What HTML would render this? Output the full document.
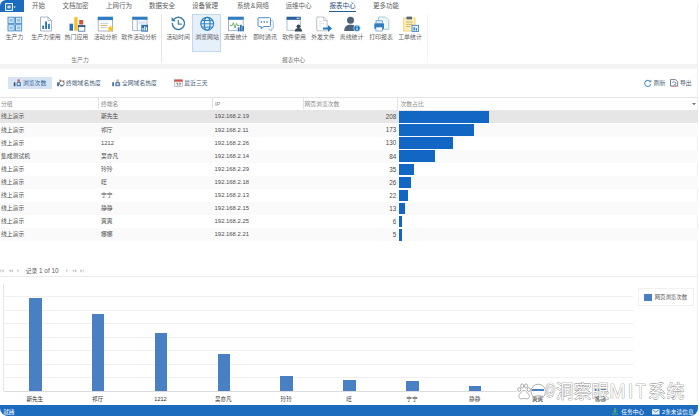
<!DOCTYPE html>
<html lang="zh-CN">
<head>
<meta charset="utf-8">
<title>报表中心 - 浏览网站</title>
<style>
html,body{margin:0;padding:0;background:#fff;}
body{width:700px;height:419px;overflow:hidden;position:relative;font-family:"Liberation Sans","Noto Sans CJK SC",sans-serif;font-size:6px;color:#444;-webkit-text-size-adjust:none;}
.a{position:absolute;white-space:nowrap;line-height:1;}
.tab{position:absolute;top:2.4px;font-size:6.5px;line-height:7px;color:#5e5e5e;white-space:nowrap;transform:translateX(-50%);}
.rb{position:absolute;top:34.3px;font-size:5.9px;line-height:7px;color:#5e5e5e;white-space:nowrap;transform:translateX(-50%);}
.ic{position:absolute;top:16px;width:16px;height:16px;}
.grp{position:absolute;top:56.7px;font-size:5.8px;line-height:7px;color:#777;white-space:nowrap;transform:translateX(-50%);}
.tb{position:absolute;top:79.5px;font-size:5.8px;line-height:7px;color:#4a5f78;white-space:nowrap;}
.th{position:absolute;top:100.5px;font-size:5.8px;line-height:7px;color:#8a8a8a;white-space:nowrap;}
.vs{position:absolute;top:98px;height:11px;width:1px;background:#e2e2e2;}
.row{position:absolute;left:0;width:698px;height:13.1px;}
.row span{position:absolute;top:3.1px;font-size:5.8px;line-height:7px;white-space:nowrap;color:#4c4c4c;}
.row i{position:absolute;left:399.100px;top:0.800px;height:11.500px;background:#1266c4;display:block;}
.c1{left:1px}.c2{left:101px}.c3{left:214.600px;font-size:5.900px !important;}.c4{right:301.800px;font-size:6.300px !important;top:2.900px !important;}
.g{position:absolute;left:3.5px;width:629px;height:1px;background:#f0f0f0;}
.bar{position:absolute;width:12.700px;background:#4880c3;}
.xl{position:absolute;top:396px;font-size:5.6px;line-height:7px;color:#333;white-space:nowrap;transform:translateX(-50%);}
</style>
</head>
<body>

<!-- window frame -->
<div class="a" style="left:697.300px;top:4px;width:1px;height:402px;background:#f0f0f0"></div>

<!-- app button -->
<div class="a" style="left:0;top:0;width:23.900px;height:12.200px;background:#1b6cbf;border-top-left-radius:6px;"></div>
<svg class="a" style="left:5px;top:2.5px" width="14" height="8" viewBox="0 0 14 8"><rect x="0.6" y="0.6" width="6.8" height="6.8" fill="none" stroke="#fff" stroke-width="1"/><rect x="2.4" y="2.6" width="3.2" height="2.8" fill="#cfe2f5"/><path d="M8.300 3.400h2.600l-1.300 1.500z" fill="#fff"/></svg>

<!-- tabs -->
<div class="tab" style="left:38.5px">开始</div>
<div class="tab" style="left:75.5px">文档加密</div>
<div class="tab" style="left:119px">上网行为</div>
<div class="tab" style="left:162px">数据安全</div>
<div class="tab" style="left:205px">设备管理</div>
<div class="tab" style="left:253px">系统<span style="margin:0 0.700px;font-size:7px">&amp;</span>网络</div>
<div class="tab" style="left:298.5px">运维中心</div>
<div class="tab" style="left:342.5px;color:#2a4f7c">报表中心</div>
<div class="a" style="left:329px;top:11.2px;width:27px;height:1.3px;background:#2b5a8e"></div>
<div class="tab" style="left:386px">更多功能</div>

<!-- ribbon -->
<div class="a" style="left:192.400px;top:13.500px;width:29.100px;height:38.700px;background:#e6f0fa;border:0.6px solid #c3d8ee;box-sizing:border-box"></div>
<div class="a" style="left:161.3px;top:14px;width:1px;height:49px;background:#e6e6e6"></div>
<div class="a" style="left:427.300px;top:14px;width:1px;height:49px;background:#f5f5f5"></div>
<div class="a" style="left:0;top:64.300px;width:698px;height:4.300px;background:#f3f3f3"></div>

<!--ICONS-START-->
<svg class="a" style="left:0;top:0" width="700" height="64" viewBox="0 0 700 64">
<!-- 1 生产力 -->
<g fill="#d6e8f7" stroke="#4089c9" stroke-width="0.900">
<rect x="8" y="17.2" width="6.2" height="6.2"/><rect x="15.5" y="17.2" width="6.2" height="6.2"/>
<rect x="8" y="24.700" width="6.2" height="6.2"/><rect x="15.500" y="24.700" width="6.2" height="6.2"/>
</g>
<g fill="#8fbde6"><rect x="9.600" y="19" width="3" height="2.600"/><rect x="17.100" y="19" width="3" height="2.600"/><rect x="9.600" y="26.500" width="3" height="2.600"/><rect x="17.100" y="26.500" width="3" height="2.600"/></g>
<!-- 2 生产力使用 -->
<path d="M40.500 17h7.500l3.500 3.500v10.500h-11z" fill="#fff" stroke="#9fb0bf" stroke-width="0.900"/>
<path d="M48 17v3.500h3.500" fill="none" stroke="#9fb0bf" stroke-width="0.800"/>
<g fill="#2773b9"><rect x="42.300" y="25.500" width="1.700" height="3.500"/><rect x="45.100" y="21.500" width="1.900" height="7.500"/><rect x="48.100" y="23.800" width="1.700" height="5.200"/></g>
<!-- 3 热门应用 -->
<rect x="69.500" y="23.700" width="3.500" height="7" fill="#2374b8"/>
<rect x="74.200" y="17.200" width="3.400" height="13.500" fill="#f2c230"/>
<rect x="79.200" y="20" width="4" height="4.500" fill="#d2523a"/>
<rect x="78.300" y="25.600" width="6.600" height="5.600" fill="#eef6fc" stroke="#3d5f84" stroke-width="0.700"/>
<rect x="78" y="25.300" width="7.200" height="1.700" fill="#355a82"/>
<!-- 4 活动分析 -->
<rect x="98.200" y="17.200" width="14.300" height="13.800" fill="#fff" stroke="#8fa6ba" stroke-width="0.800"/>
<rect x="97.800" y="16.800" width="15.100" height="3.300" fill="#2f7dc3"/>
<rect x="100.500" y="22.800" width="8" height="0.900" fill="#b9c4ce"/><rect x="100.500" y="25" width="7" height="0.900" fill="#e0a95a"/><rect x="100.500" y="27.200" width="6" height="0.900" fill="#b9c4ce"/>
<path d="M110.500 25.300l1.100 2.200 2.400 0.300-1.800 1.700 0.500 2.400-2.200-1.200-2.200 1.200 0.500-2.400-1.800-1.700 2.400-0.300z" fill="#f3c32c"/>
<!-- 5 软件活动分析 -->
<rect x="132.700" y="17.200" width="14.300" height="13.500" fill="#fff" stroke="#8fa6ba" stroke-width="0.800"/>
<rect x="132.300" y="16.800" width="15.100" height="3" fill="#2f7dc3"/>
<rect x="136.800" y="20" width="0.800" height="10.500" fill="#8fa6ba"/>
<rect x="138.500" y="21.200" width="7" height="3" fill="#d9e7f3"/>
<rect x="141.300" y="24.800" width="6.700" height="6.800" fill="#2a6eb6"/>
<g fill="#fff"><rect x="142.400" y="28" width="1.100" height="2.600"/><rect x="144.200" y="26.300" width="1.100" height="4.300"/><rect x="146" y="27.200" width="1.100" height="3.400"/></g>
<!-- 6 活动时间 -->
<g fill="none" stroke="#3e7fa6" stroke-width="1.500" stroke-linecap="round">
<path d="M173.600 19.600a6.100 6.100 0 1 1 -1.300 3.900"/>
<path d="M178.300 20.300v3.900h3" stroke-width="1.200"/>
</g>
<path d="M171.600 17v4.300h4.300z" fill="#3e7fa6"/>
<!-- 7 浏览网站 -->
<g fill="none" stroke="#2a7fc4" stroke-width="1.150">
<circle cx="207.200" cy="23.800" r="6.400"/>
<ellipse cx="207.200" cy="23.800" rx="2.900" ry="6.400"/>
<path d="M200.800 23.800h12.800M201.900 20.500h10.600M201.900 27.100h10.600" stroke-width="0.950"/>
</g>
<!-- 8 流量统计 -->
<rect x="228.400" y="17.200" width="14.800" height="13.500" fill="#fff" stroke="#8fa6ba" stroke-width="0.800"/>
<rect x="228" y="16.800" width="15.600" height="3" fill="#2f7dc3"/>
<path d="M230 25.500h2.200l1.200-2.800 1.600 5.200 1.500-4.500 1 2.100h2" fill="none" stroke="#5fa860" stroke-width="0.900"/>
<g fill="#2a6eb6"><rect x="237.800" y="27.300" width="1.700" height="4"/><rect x="240" y="24.800" width="1.700" height="6.500"/><rect x="242.200" y="26" width="1.700" height="5.300"/></g>
<!-- 9 即时通讯 -->
<path d="M262 20.500h10.300a1 1 0 0 1 1 1v6.500a1 1 0 0 1 -1 1h-1.300l0.300 2-2.800-2" fill="#f2f8fd" stroke="#8fb4d6" stroke-width="0.800"/>
<path d="M259 17.700h10.500a1 1 0 0 1 1 1v6.800a1 1 0 0 1 -1 1h-5.500l-3 2.400 0.300-2.400h-2.300a1 1 0 0 1 -1-1v-6.800a1 1 0 0 1 1-1z" fill="#fff" stroke="#4f8fc6" stroke-width="1"/>
<g fill="#2b5f96"><circle cx="261.300" cy="22" r="0.800"/><circle cx="264.200" cy="22" r="0.800"/><circle cx="267.100" cy="22" r="0.800"/></g>
<!-- 10 软件使用 -->
<rect x="287" y="17.200" width="13.300" height="13" fill="#fff" stroke="#9fb2c4" stroke-width="0.800"/>
<rect x="286.600" y="16.800" width="14.100" height="3" fill="#2b5f9c"/>
<rect x="296.500" y="17.600" width="3.200" height="1.300" fill="#9fc3e6"/>
<circle cx="298.500" cy="26.300" r="1.900" fill="#3a4856"/>
<path d="M294.800 31.500c0-2.600 1.600-3.600 3.700-3.600s3.700 1 3.700 3.600z" fill="#3a4856"/>
<!-- 11 外发文件 -->
<path d="M316.700 17h7l3.500 3.500v10.300h-10.500z" fill="#fff" stroke="#b4bcc4" stroke-width="0.900"/>
<path d="M323.700 17v3.500h3.500" fill="none" stroke="#b4bcc4" stroke-width="0.800"/>
<path d="M318.800 21.500h3.500M318.800 23.700h5.500M318.800 25.900h3" stroke="#d5dade" stroke-width="0.800"/>
<path d="M323 27.400h5v-2.400l4 3.500-4 3.500v-2.400h-5z" fill="#1f78c2"/>
<!-- 12 离线统计 -->
<circle cx="350.500" cy="20.300" r="3.500" fill="#4d6178"/>
<path d="M344.200 31c0-4.500 2.600-6.300 6.300-6.300s6.300 1.800 6.300 6.300z" fill="#4d6178"/>
<circle cx="357" cy="28.300" r="3.300" fill="#1f78c2" stroke="#fff" stroke-width="0.600"/>
<rect x="356.500" y="27.700" width="1" height="2.500" fill="#fff"/><rect x="356.500" y="26.100" width="1" height="1" fill="#fff"/>
<!-- 13 打印报表 -->
<path d="M378.500 17h7l3.300 3.300v9h-10.300z" fill="#eef6f6" stroke="#9cc6c8" stroke-width="0.900"/>
<rect x="374.300" y="23.300" width="9.700" height="5.700" rx="0.800" fill="#2f7dc3"/>
<rect x="376" y="20.800" width="6.300" height="2.800" fill="#dfeaf4" stroke="#2f7dc3" stroke-width="0.600"/>
<rect x="375.900" y="27" width="6.500" height="4" fill="#fff" stroke="#2f7dc3" stroke-width="0.600"/>
<!-- 14 工单统计 -->
<rect x="403.700" y="18" width="11.300" height="13" fill="#fdf0c0" stroke="#f0cf6a" stroke-width="0.900"/>
<rect x="406.500" y="16.600" width="5.500" height="2.800" fill="#5a6878"/>
<path d="M405.800 22h7M405.800 24.300h7M405.800 26.600h4.500" stroke="#c9a43c" stroke-width="0.800"/>
<rect x="412" y="25.300" width="6.600" height="6.300" fill="#e8f1fa" stroke="#2f7dc3" stroke-width="0.800"/>
<rect x="413.500" y="27" width="1.300" height="3.500" fill="#2f7dc3"/><rect x="415.700" y="28.200" width="1.300" height="2.300" fill="#2f7dc3"/>
</svg>
<!--ICONS-END-->

<div class="rb" style="left:14.5px">生产力</div>
<div class="rb" style="left:46px">生产力使用</div>
<div class="rb" style="left:76.400px">热门应用</div>
<div class="rb" style="left:105.500px">活动分析</div>
<div class="rb" style="left:139px">软件活动分析</div>
<div class="rb" style="left:178px">活动时间</div>
<div class="rb" style="left:207px">浏览网站</div>
<div class="rb" style="left:235.500px">流量统计</div>
<div class="rb" style="left:265px">即时通讯</div>
<div class="rb" style="left:294px">软件使用</div>
<div class="rb" style="left:323px">外发文件</div>
<div class="rb" style="left:351.600px">离线统计</div>
<div class="rb" style="left:381px">打印报表</div>
<div class="rb" style="left:410px">工单统计</div>

<div class="grp" style="left:80px">生产力</div>
<div class="grp" style="left:293.5px">报表中心</div>

<!-- toolbar -->
<div class="a" style="left:8px;top:76.8px;width:43.700px;height:12.500px;background:#d6e4f3"></div>
<!--TBICONS-START-->
<svg class="a" style="left:0;top:72px" width="700" height="24" viewBox="0 72 700 24">
<!-- tb1 -->
<rect x="13.800" y="82.400" width="1.600" height="3.800" fill="#34506e"/>
<path d="M16.600 86.300v-2.800c0-1.400 1-2.300 2.200-2.300s2.200 0.900 2.200 2.300v2.800z" fill="#5b86b4"/>
<circle cx="18.700" cy="80.500" r="1.200" fill="#c9605a"/>
<rect x="17.800" y="83" width="1.800" height="2" fill="#dbe7f3"/>
<!-- tb2 -->
<rect x="57.200" y="82.400" width="1.600" height="3.800" fill="#34506e"/>
<circle cx="61.800" cy="83.300" r="2.400" fill="#fff" stroke="#66727e" stroke-width="1"/>
<circle cx="60.200" cy="80.400" r="0.800" fill="#c9605a"/><circle cx="63.800" cy="81" r="0.700" fill="#c9605a"/>
<path d="M60.300 86.300l1.500-1.300 1.500 1.300z" fill="#34506e"/>
<!-- tb3 -->
<rect x="112.300" y="82.200" width="1.600" height="4" fill="#2f5f96"/>
<path d="M115.200 86.300v-2.600c0-1.400 1.100-2.200 2.500-2.200s2.500 0.800 2.500 2.200v2.600z" fill="#5b86b4"/>
<circle cx="117.700" cy="80.600" r="1.300" fill="#d9b48a"/>
<rect x="116.800" y="83.200" width="1.800" height="2" fill="#dbe7f3"/>
<!-- tb4 calendar -->
<rect x="174.500" y="80" width="7.800" height="6.500" fill="#f4f4f4" stroke="#9aa3ab" stroke-width="0.600"/>
<rect x="174.200" y="79.500" width="8.400" height="2.200" fill="#d4524c"/>
<path d="M176.200 83.200h1.600v2.500M179 83.200h1.600l-1 2.500" fill="none" stroke="#5a6670" stroke-width="0.700"/>
<!-- refresh -->
<path d="M650.300 81.600a3.100 3.100 0 1 0 0.500 2.600" fill="none" stroke="#5b9bcb" stroke-width="1.100"/>
<path d="M651.300 79.600v2.600h-2.600z" fill="#5b9bcb"/>
<!-- export -->
<path d="M670.500 79.600h5l2.200 2.200v4.200h-7.200z" fill="#fff" stroke="#4a6488" stroke-width="0.800"/>
<path d="M672.300 82.300c1.500-0.600 3-0.600 3.600 0.600s-0.800 2-2 1.600" fill="none" stroke="#4a6488" stroke-width="0.800"/>
<rect x="671" y="86" width="6.500" height="0.800" fill="#d98a96"/>
</svg>
<!--TBICONS-END-->
<div class="tb" style="left:23px;color:#2f5f96">浏览次数</div>
<div class="tb" style="left:66px">终端域名热度</div>
<div class="tb" style="left:122px">全网域名热度</div>
<div class="tb" style="left:184.3px">最近三天</div>
<div class="tb" style="left:653.8px">刷新</div>
<div class="tb" style="left:680px">导出</div>

<!-- table header -->
<div class="a" style="left:0;top:96.8px;width:698px;height:1px;background:#e4e4e4"></div>
<div class="a" style="left:0;top:109.7px;width:698px;height:1.1px;background:#c6c6c6"></div>
<div class="th" style="left:1px">分组</div>
<div class="th" style="left:101px">终端名</div>
<div class="th" style="left:215px">IP</div>
<div class="th" style="left:304.5px">网页浏览次数</div>
<div class="th" style="left:400.5px">次数占比</div>
<div class="vs" style="left:98.3px"></div>
<div class="vs" style="left:212.3px"></div>
<div class="vs" style="left:302.5px"></div>
<div class="vs" style="left:397px"></div>
<svg class="a" style="left:692.200px;top:102.600px" width="4" height="2.400" viewBox="0 0 4 2.400"><path d="M0 0h4L2 2.400z" fill="#777"/></svg>

<!-- table rows -->
<div class="row" style="top:110.4px;background:#e6e6e6"><span class="c1">线上演示</span><span class="c2">斯先生</span><span class="c3">192.168.2.19</span><span class="c4">208</span><i style="width:89.800px"></i></div>
<div class="row" style="top:123.5px;background:#fafafa"><span class="c1">线上演示</span><span class="c2">祁厅</span><span class="c3">192.168.2.11</span><span class="c4">173</span><i style="width:74.5px"></i></div>
<div class="row" style="top:136.6px"><span class="c1">线上演示</span><span class="c2">1212</span><span class="c3">192.168.2.26</span><span class="c4">130</span><i style="width:53.6px"></i></div>
<div class="row" style="top:149.7px;background:#fafafa"><span class="c1">集成测试机</span><span class="c2">吴亦凡</span><span class="c3">192.168.2.14</span><span class="c4">84</span><i style="width:35.7px"></i></div>
<div class="row" style="top:162.8px"><span class="c1">线上演示</span><span class="c2">玲玲</span><span class="c3">192.168.2.29</span><span class="c4">35</span><i style="width:14.9px"></i></div>
<div class="row" style="top:175.9px;background:#fafafa"><span class="c1">线上演示</span><span class="c2">旺</span><span class="c3">192.168.2.18</span><span class="c4">26</span><i style="width:11.9px"></i></div>
<div class="row" style="top:189px"><span class="c1">线上演示</span><span class="c2">宁宁</span><span class="c3">192.168.2.13</span><span class="c4">22</span><i style="width:8.9px"></i></div>
<div class="row" style="top:202.1px;background:#fafafa"><span class="c1">线上演示</span><span class="c2">静静</span><span class="c3">192.168.2.15</span><span class="c4">13</span><i style="width:5.9px"></i></div>
<div class="row" style="top:215.2px"><span class="c1">线上演示</span><span class="c2">爽爽</span><span class="c3">192.168.2.25</span><span class="c4">6</span><i style="width:2.9px"></i></div>
<div class="row" style="top:228.3px;background:#fafafa"><span class="c1">线上演示</span><span class="c2">娜娜</span><span class="c3">192.168.2.21</span><span class="c4">5</span><i style="width:2.9px"></i></div>

<!-- pager -->
<div class="a" style="left:25.800px;top:267.300px;font-size:5.800px;line-height:7px;color:#5a5a5a">记录 <span style="font-size:6.400px">1 of 10</span></div>
<svg class="a" style="left:0;top:268px" width="90" height="6" viewBox="0 0 90 6" fill="#c6c6c6">
<path d="M0 1.200h0.700v3.200H0zM3.800 1.200v3.200L1.200 2.800z"/><path d="M10.800 1.200v3.200L8.600 2.800zM13 1.200v3.200l-2.200-1.600z"/><path d="M18.600 1.200v3.200L16.800 2.800z"/>
<path d="M66.200 1.200v3.200l1.800-1.600z"/><path d="M72.800 1.200v3.200l2.200-1.600zM75 1.200v3.200l2.200-1.600z"/><path d="M80.200 1.200v3.200l2.600-1.600zM83.400 1.200h0.700v3.200h-0.700z"/>
</svg>
<div class="a" style="left:0;top:276px;width:698px;height:1px;background:#ececec"></div>

<!-- chart -->
<div class="a" style="left:3px;top:284px;width:1px;height:107px;background:#e6e6e6"></div>
<div class="g" style="top:296.3px"></div>
<div class="g" style="top:309.8px"></div>
<div class="g" style="top:323.3px"></div>
<div class="g" style="top:336.8px"></div>
<div class="g" style="top:350.3px"></div>
<div class="g" style="top:363.8px"></div>
<div class="g" style="top:377.3px"></div>
<div class="g" style="top:390.8px;background:#dcdcdc;width:513px"></div>

<div class="bar" style="left:28.9px;top:298.0px;height:93.1px"></div>
<div class="bar" style="left:91.8px;top:313.7px;height:77.4px"></div>
<div class="bar" style="left:154.6px;top:333.0px;height:58.1px"></div>
<div class="bar" style="left:217.5px;top:353.6px;height:37.5px"></div>
<div class="bar" style="left:280.3px;top:375.6px;height:15.5px"></div>
<div class="bar" style="left:343.1px;top:379.6px;height:11.5px"></div>
<div class="bar" style="left:406.0px;top:381.4px;height:9.7px"></div>
<div class="bar" style="left:468.8px;top:385.5px;height:5.6px"></div>
<div class="bar" style="left:531.7px;top:388.6px;height:2.5px"></div>
<div class="bar" style="left:594.5px;top:388.9px;height:2.2px"></div>

<div class="xl" style="left:34.8px">斯先生</div>
<div class="xl" style="left:97.7px">祁厅</div>
<div class="xl" style="left:160.5px">1212</div>
<div class="xl" style="left:223.3px">吴亦凡</div>
<div class="xl" style="left:286.2px">玲玲</div>
<div class="xl" style="left:349.0px">旺</div>
<div class="xl" style="left:411.9px">宁宁</div>
<div class="xl" style="left:474.7px">静静</div>
<div class="xl" style="left:537.6px">爽爽</div>
<div class="xl" style="left:600.5px">娜娜</div>

<!-- legend -->
<div class="a" style="left:637.6px;top:288px;width:56px;height:18px;border:0.6px solid #f0f0f0;box-sizing:border-box"></div>
<div class="a" style="left:644px;top:294px;width:7.800px;height:7px;background:#4880c3"></div>
<div class="a" style="left:654.7px;top:294.2px;font-size:5.4px;line-height:7px;color:#555">网页浏览次数</div>

<!-- watermark -->
<!--WM-START-->
<svg class="a" style="left:510px;top:376px" width="188" height="30" viewBox="510 376 188 30" font-family="'Liberation Sans','Noto Sans CJK SC',sans-serif">
<g fill="rgba(255,255,255,0.8)" stroke="#8c8c8c" stroke-width="0.700">
<ellipse cx="519.300" cy="389.500" rx="1.500" ry="2"/><ellipse cx="522.200" cy="386" rx="1.500" ry="2.100"/><ellipse cx="526" cy="386" rx="1.500" ry="2.100"/><ellipse cx="528.800" cy="389.500" rx="1.500" ry="2"/>
<path d="M524.100 390.500c2.200 0 3 2 4.400 3.600 1.300 1.500 1.200 4.400-1.300 4.700-1.400 0.200-2-0.400-3.100-0.400s-1.700 0.600-3.100 0.400c-2.500-0.300-2.600-3.200-1.300-4.700 1.400-1.600 2.200-3.600 4.400-3.600z"/>
<circle cx="538.300" cy="391.500" r="7.300" fill="none"/>
<path d="M534 396.500c3-1 6.500-1 9 0"/>
</g>
<g fill="rgba(255,255,255,0.96)" stroke="#828282" stroke-width="0.700" paint-order="stroke fill">
<text x="544.600" y="394.800" font-size="16" textLength="11.300" lengthAdjust="spacingAndGlyphs" stroke-width="0.650">@</text>
<text x="556" y="398" font-size="17.800">洞察眼</text>
<text x="609.600" y="397.700" font-size="20" textLength="16" lengthAdjust="spacingAndGlyphs">M</text>
<text x="627.800" y="397.700" font-size="20">I</text>
<text x="635.700" y="397.700" font-size="20" textLength="9.700" lengthAdjust="spacingAndGlyphs">T</text>
<text x="648" y="398" font-size="17.800" textLength="36.600" lengthAdjust="spacing">系统</text>
</g>
</svg>
<!--WM-END-->

<!-- status bar -->
<div class="a" style="left:0;top:405px;width:698.3px;height:10.8px;background:#1b6cbf;border-radius:0 0 8px 8px;overflow:hidden">
<div class="a" style="left:3.2px;top:3.6px;font-size:5.7px;line-height:7px;color:#fff">就绪</div>
<svg class="a" style="left:611px;top:2.5px" width="8" height="7" viewBox="0 0 8 7"><path d="M3.300 0h1.400v2.800h1.500L4 5.200 1.800 2.800h1.500z" fill="#4fb56a"/><rect x="1" y="5.600" width="6" height="0.900" fill="#4fb56a"/></svg>
<div class="a" style="left:621.300px;top:3.600px;font-size:5.700px;line-height:7px;color:#fff">任务中心</div>
<svg class="a" style="left:652px;top:3.800px" width="8" height="6" viewBox="0 0 8 6"><rect x="0" y="0" width="7.500" height="5.500" rx="0.600" fill="#e8eef5"/><path d="M0.500 0.600l3.250 2.500 3.250-2.500" fill="none" stroke="#1b6cbf" stroke-width="0.700"/></svg>
<div class="a" style="left:662px;top:3.600px;font-size:5.700px;line-height:7px;color:#fff">2条未读信息</div>
</div>

</body>
</html>
